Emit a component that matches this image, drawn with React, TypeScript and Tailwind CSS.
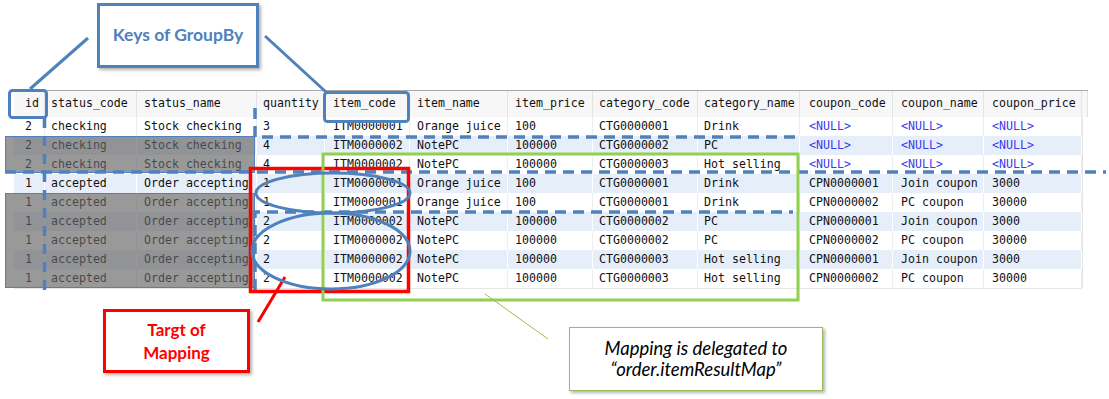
import React from 'react'

type Cell = string | null

const COLS = [
  { name: 'id', pad: 'pl-[11px]' },
  { name: 'status_code', pad: 'pl-[6px]' },
  { name: 'status_name', pad: 'pl-[7px]' },
  { name: 'quantity', pad: 'pl-[6px]' },
  { name: 'item_code', pad: 'pl-[8px]' },
  { name: 'item_name', pad: 'pl-[7px]' },
  { name: 'item_price', pad: 'pl-[7px]' },
  { name: 'category_code', pad: 'pl-[6px]' },
  { name: 'category_name', pad: 'pl-[6px]' },
  { name: 'coupon_code', pad: 'pl-[9px]' },
  { name: 'coupon_name', pad: 'pl-[8px]' },
  { name: 'coupon_price', pad: 'pl-[8px]' },
  { name: '', pad: 'pl-0' },
]

const ROWS: Cell[][] = [
  ['2', 'checking', 'Stock checking', '3', 'ITM0000001', 'Orange juice', '100', 'CTG0000001', 'Drink', null, null, null],
  ['2', 'checking', 'Stock checking', '4', 'ITM0000002', 'NotePC', '100000', 'CTG0000002', 'PC', null, null, null],
  ['2', 'checking', 'Stock checking', '4', 'ITM0000002', 'NotePC', '100000', 'CTG0000003', 'Hot selling', null, null, null],
  ['1', 'accepted', 'Order accepting', '1', 'ITM0000001', 'Orange juice', '100', 'CTG0000001', 'Drink', 'CPN0000001', 'Join coupon', '3000'],
  ['1', 'accepted', 'Order accepting', '1', 'ITM0000001', 'Orange juice', '100', 'CTG0000001', 'Drink', 'CPN0000002', 'PC coupon', '30000'],
  ['1', 'accepted', 'Order accepting', '2', 'ITM0000002', 'NotePC', '100000', 'CTG0000002', 'PC', 'CPN0000001', 'Join coupon', '3000'],
  ['1', 'accepted', 'Order accepting', '2', 'ITM0000002', 'NotePC', '100000', 'CTG0000002', 'PC', 'CPN0000002', 'PC coupon', '30000'],
  ['1', 'accepted', 'Order accepting', '2', 'ITM0000002', 'NotePC', '100000', 'CTG0000003', 'Hot selling', 'CPN0000001', 'Join coupon', '3000'],
  ['1', 'accepted', 'Order accepting', '2', 'ITM0000002', 'NotePC', '100000', 'CTG0000003', 'Hot selling', 'CPN0000002', 'PC coupon', '30000'],
]

const GRID =
  'grid grid-cols-[31px_92px_120px_68px_85px_98px_85px_105px_102px_93px_91px_98px_6px]'

function ResultGrid() {
  return (
    <div className="w-[1074px] border-t border-[#a8a8a8] font-['DejaVu_Sans_Mono',monospace] text-[11.6px] text-[#111]">
      <div className={`${GRID} h-[26px] bg-[#f7f7f7]`}>
        {COLS.map((c, i) => (
          <div
            key={i}
            className={`flex items-center border-r border-[#e3e3e3] whitespace-nowrap ${c.pad}`}
          >
            {c.name}
          </div>
        ))}
      </div>
      {ROWS.map((row, r) => {
        const alt = r % 2 === 1
        return (
          <div key={r} className={`${GRID} h-[19px]`}>
            {row.map((v, i) => (
              <div
                key={i}
                className={[
                  'flex items-center whitespace-nowrap border-r',
                  COLS[i].pad,
                  alt ? 'bg-[#e6eefa] border-white' : 'bg-white border-[#eeeeee]',
                  v === null ? 'text-[#3a3af0]' : '',
                ].join(' ')}
              >
                {v === null ? '<NULL>' : v}
              </div>
            ))}
            <div className="border-l border-[#e3e3e3]" />
          </div>
        )
      })}
      <div className="h-px w-[1068px] bg-[#e6e6e6]" />
    </div>
  )
}

function Annotations() {
  const blue = '#4f81bd'
  const dash = '11 7'
  return (
    <svg
      className="pointer-events-none absolute left-0 top-0"
      width={1109}
      height={399}
      viewBox="0 0 1109 399"
    >
      {/* callout lines for "Keys of GroupBy" */}
      <line x1={88} y1={38} x2={30} y2={89} stroke={blue} strokeWidth={3} />
      <line x1={265} y1={36} x2={326} y2={92} stroke={blue} strokeWidth={3} />

      {/* key column boxes */}
      <rect x={9.5} y={90.5} width={37} height={27} rx={3} fill="none" stroke={blue} strokeWidth={3} />
      <rect x={324.5} y={92.5} width={84} height={29} rx={3} fill="none" stroke={blue} strokeWidth={3} />

      {/* group dividers */}
      <line x1={44.5} y1={118} x2={44.5} y2={295} stroke={blue} strokeWidth={3.5} strokeDasharray="10 8" />
      <path d="M255 108 V137 H800" fill="none" stroke={blue} strokeWidth={3.5} strokeDasharray={dash} />
      <line x1={5} y1={172} x2={1106} y2={172} stroke={blue} strokeWidth={3.5} strokeDasharray={dash} />
      <path d="M255 290 V212 H793" fill="none" stroke={blue} strokeWidth={3.5} strokeDasharray={dash} />

      {/* target of mapping */}
      <rect x={250.5} y={168.5} width={158} height={123} fill="none" stroke="#ff0000" strokeWidth={3.5} />
      <line x1={258} y1={322} x2={285} y2={277} stroke="#ff0000" strokeWidth={3} />

      {/* delegated columns */}
      <rect x={323} y={154} width={475} height={146} fill="none" stroke="#92d050" strokeWidth={3} />
      <line x1={485} y1={294} x2={548} y2={339} stroke="#9bbb59" strokeWidth={1} />

      {/* grouped rows */}
      <ellipse cx={333} cy={193} rx={77} ry={20} fill="none" stroke={blue} strokeWidth={3} />
      <ellipse cx={331} cy={251} rx={79} ry={38} fill="none" stroke={blue} strokeWidth={3} />
    </svg>
  )
}

export default function App() {
  return (
    <div className="relative h-[399px] w-[1109px] overflow-hidden bg-white">
      <div className="pl-[14px] pt-[90px]">
        <ResultGrid />
      </div>

      {/* greyed-out duplicate group columns */}
      <div className="absolute left-[5px] top-[136px] h-[37px] w-[250px] border border-[#4f81bd] bg-[rgba(100,100,100,0.66)]" />
      <div className="absolute left-[5px] top-[193px] h-[95px] w-[250px] border border-[#4f81bd] bg-[rgba(100,100,100,0.66)]" />

      <Annotations />

      <div className="absolute left-[97px] top-[3px] flex h-[65px] w-[162px] items-center justify-center border-[3px] border-[#4f81bd] bg-white shadow-[2px_2px_3px_rgba(0,0,0,0.3)]">
        <span className="font-['Lato',sans-serif] text-[17.5px] font-bold text-[#4f81bd]">Keys of GroupBy</span>
      </div>

      <div className="absolute left-[103px] top-[309px] flex h-[64px] w-[147px] flex-col items-center justify-center border-[3px] border-[#ff0000] bg-white font-['Lato',sans-serif] text-[17px] font-bold leading-[23px] text-[#ff0000] shadow-[2px_2px_3px_rgba(0,0,0,0.3)]">
        <span>Targt of</span>
        <span>Mapping</span>
      </div>

      <div className="absolute left-[569px] top-[327px] flex h-[64px] w-[254px] flex-col items-center justify-center border border-[#9bbb59] bg-white font-['Lato',sans-serif] text-[18.5px] italic leading-[21px] text-black shadow-[2px_2px_3px_rgba(0,0,0,0.3)]">
        <span>Mapping is delegated to</span>
        <span>“order.itemResultMap”</span>
      </div>
    </div>
  )
}
